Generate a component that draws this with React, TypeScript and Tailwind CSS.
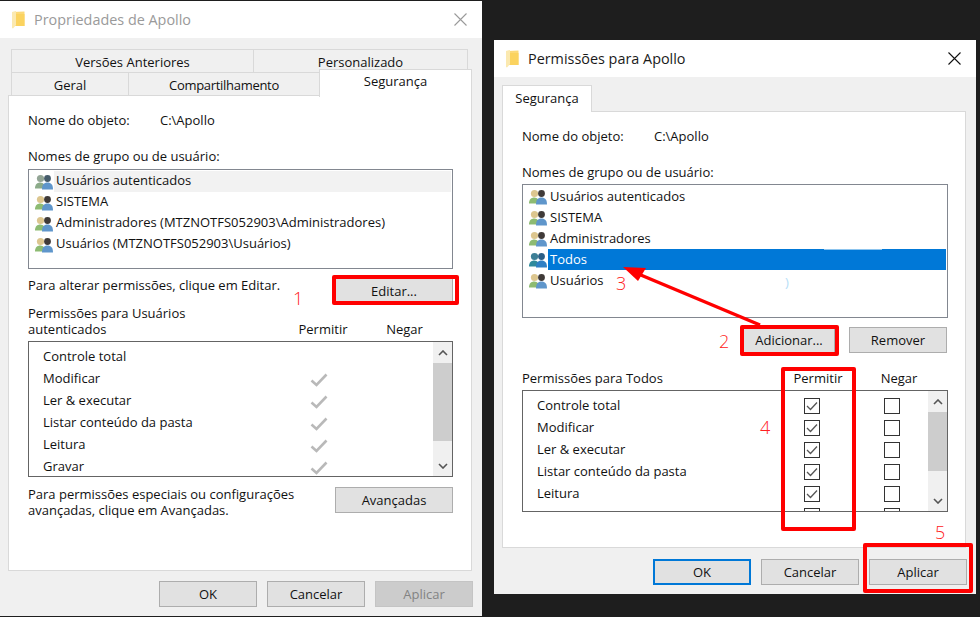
import React from 'react';

const FolderIcon = () => (
    <svg width="13" height="18" viewBox="0 0 13 18">
        <path d="M0 1 L12.5 0.5 L12.5 15 L0 15 Z" fill="#fcd978" />
        <path d="M4 3 L12.5 3 L12.5 15 L4 15 Z" fill="#fbd35f" />
        <path d="M0 1 L4 0 L4 14 L1 17.5 L0 17 Z" fill="#fbe9b0" />
    </svg>
);

const UsersIcon: React.FC<{ selected?: boolean; dim?: boolean }> = ({ selected, dim }) => {
    const leftHead = selected ? '#3d7f96' : dim ? '#93a595' : '#dcc68f';
    const leftBody = selected ? '#2f8a9c' : dim ? '#8cab8a' : '#8dbb72';
    const rightHead = selected ? '#2c5f86' : dim ? '#465c6b' : '#3f3a38';
    const rightBody = selected ? '#2f7fc4' : '#5f96cb';
    return (
        <svg width="18" height="16" viewBox="0 0 18 16" className="shrink-0">
            <circle cx="5.5" cy="4.5" r="3.6" fill={leftHead} />
            <path d="M0 14.5 C0 10.5 2 8.5 5.5 8.5 C8.5 8.5 10 10.5 10 14.5 Z" fill={leftBody} />
            <circle cx="12.5" cy="4.5" r="3.4" fill={rightHead} />
            <path d="M7 15.5 C7 10.5 9 8.5 12.5 8.5 C16 8.5 18 10.5 18 15.5 Z" fill={rightBody} />
        </svg>
    );
};

const Btn: React.FC<{ label: string; w?: string; disabled?: boolean; focused?: boolean }> = ({ label, w = 'w-[98px]', disabled, focused }) => (
    <div
        className={`${w} h-[26px] flex items-center justify-center pt-px ${
            focused
                ? 'bg-[#e1e1e1] border-2 border-[#0078d7]'
                : disabled
                  ? 'border border-[#c4c4c4] bg-[#cccccc] text-[#838383]'
                  : 'bg-[#e1e1e1] border border-[#adadad]'
        }`}
    >
        {label}
    </div>
);

const Chevron: React.FC<{ down?: boolean }> = ({ down }) => (
    <svg width="10" height="6" viewBox="0 0 10 6">
        <path d={down ? 'M1 1 L5 5 L9 1' : 'M1 5 L5 1 L9 5'} fill="none" stroke="#555555" strokeWidth="1.6" />
    </svg>
);

const Scrollbar: React.FC<{ thumb: string }> = ({ thumb }) => (
    <div className="w-[19px] shrink-0 bg-[#f0f0f0] flex flex-col">
        <div className="h-[21px] flex items-center justify-center shrink-0"><Chevron /></div>
        <div className={`${thumb} bg-[#cdcdcd] shrink-0`} />
        <div className="flex-1" />
        <div className="h-[21px] flex items-center justify-center shrink-0"><Chevron down /></div>
    </div>
);

const GreyCheck = () => (
    <svg width="18" height="14" viewBox="0 0 18 14" className="mt-[2px]">
        <path d="M1.5 7.5 L6.5 12 L16.5 1.5" fill="none" stroke="#b9b9b9" strokeWidth="2.6" />
    </svg>
);

const CheckBox: React.FC<{ checked?: boolean }> = ({ checked }) => (
    <div className="w-[16px] h-[16px] -mt-px border border-[#333333] bg-white flex items-center justify-center shrink-0">
        {checked && (
            <svg width="12" height="10" viewBox="0 0 12 10">
                <path d="M1 5 L4.5 8.5 L11 1.5" fill="none" stroke="#555555" strokeWidth="1.3" />
            </svg>
        )}
    </div>
);

const leftPerms = ['Controle total', 'Modificar', 'Ler & executar', 'Listar conteúdo da pasta', 'Leitura', 'Gravar'];
const rightPerms = ['Controle total', 'Modificar', 'Ler & executar', 'Listar conteúdo da pasta', 'Leitura'];

const TitleBar: React.FC<{ title: string; dim?: boolean }> = ({ title, dim }) => (
    <div className="h-[37px] bg-white flex items-center shrink-0">
        <div className="ml-[12px] mr-[9px] flex"><FolderIcon /></div>
        <span className={`text-[14.4px] flex-1 ${dim ? 'text-[#9a9a9a]' : 'text-[#1a1a1a]'}`}>{title}</span>
        <svg width="13" height="13" viewBox="0 0 13 13" className="mr-[15px]">
            <path d="M0.5 0.5 L12.5 12.5 M12.5 0.5 L0.5 12.5" stroke={dim ? '#9a9a9a' : '#111111'} strokeWidth="1.1" />
        </svg>
    </div>
);

const PropertiesDialog = () => (
    <div className="w-[482px] h-[615px] mt-px bg-[#f0f0f0] flex flex-col shrink-0">
        <TitleBar title="Propriedades de Apollo" dim />
        <div className="mt-[11px] ml-[11px] flex h-[23px] w-[457px] border-t border-[#d9d9d9]">
            <div className="w-[243px] border-x border-[#d9d9d9] flex items-center justify-center pt-[3px]">Versões Anteriores</div>
            <div className="flex-1 border-r border-[#d9d9d9] flex items-center justify-center pt-[3px]">Personalizado</div>
        </div>
        <div className="ml-[11px] flex h-[23px] border-t border-[#d9d9d9] w-[308px]">
            <div className="w-[118px] border-x border-[#d9d9d9] flex items-center justify-center pt-[3px]">Geral</div>
            <div className="w-[190px] flex items-center justify-center pt-[3px] tracking-[-0.3px]">Compartilhamento</div>
        </div>
        <div className="relative ml-[8px] w-[464px] h-[476px] bg-white border border-[#d9d9d9] pl-[19px] pt-[17px] flex flex-col">
            <div className="absolute left-[310px] top-[-27px] w-[153px] h-[28px] bg-white border-x border-t border-[#d9d9d9] flex items-center justify-center pb-[3px]">
                Segurança
            </div>
            <div className="flex h-[16px] items-center">
                <span className="w-[132px]">Nome do objeto:</span>
                <span>C:\Apollo</span>
            </div>
            <div className="mt-[20px] h-[16px] flex items-center">Nomes de grupo ou de usuário:</div>
            <div className="mt-[4px] w-[425px] h-[100px] border border-[#828790] bg-white px-px pt-px">
                {[
                    'Usuários autenticados',
                    'SISTEMA',
                    'Administradores (MTZNOTFS052903\\Administradores)',
                    'Usuários (MTZNOTFS052903\\Usuários)',
                ].map((name, i) => (
                    <div key={name} className="h-[21px] flex items-center pl-[5px]">
                        <UsersIcon dim={i === 0} />
                        <div className={`ml-[1px] flex-1 h-full flex items-center pl-[2px] pb-[2px] ${i === 0 ? 'bg-[#f2f2f2]' : ''}`}>{name}</div>
                    </div>
                ))}
            </div>
            <div className="mt-[9px] w-[425px] flex justify-between h-[26px]">
                <span className="h-[16px] flex items-center">Para alterar permissões, clique em Editar.</span>
                <Btn label="Editar..." w="w-[118px]" />
            </div>
            <div className="mt-px w-[425px] h-[32px] flex items-end">
                <div className="w-[255px] leading-[16px]">Permissões para Usuários<br />autenticados</div>
                <div className="w-[80px] text-center leading-[16px]">Permitir</div>
                <div className="w-[83px] text-center leading-[16px]">Negar</div>
            </div>
            <div className="mt-[4px] w-[425px] h-[136px] border border-[#646464] bg-white flex">
                <div className="flex-1 pt-[4px] pl-[14px]">
                    {leftPerms.map((p, i) => (
                        <div key={p} className="h-[22px] flex items-center">
                            <span className="w-[267px]">{p}</span>
                            {i > 0 && <GreyCheck />}
                        </div>
                    ))}
                </div>
                <Scrollbar thumb="h-[78px]" />
            </div>
            <div className="mt-[9px] w-[425px] flex justify-between">
                <div className="leading-[16px]">Para permissões especiais ou configurações<br />avançadas, clique em Avançadas.</div>
                <div className="mt-px">
                    <Btn label="Avançadas" w="w-[118px]" />
                </div>
            </div>
        </div>
        <div className="mt-[10px] pr-[9px] flex justify-end gap-[10px]">
            <Btn label="OK" />
            <Btn label="Cancelar" />
            <Btn label="Aplicar" disabled />
        </div>
    </div>
);

const PermissionsDialog = () => (
    <div className="w-[482px] h-[554px] ml-[12px] mt-[40px] bg-[#f0f0f0] flex flex-col shrink-0">
        <TitleBar title="Permissões para Apollo" />
        <div className="mt-[8px] ml-[8px] w-[90px] h-[27px] bg-white border-x border-t border-[#d9d9d9] flex items-center justify-center shrink-0 -mb-px relative z-10">
            Segurança
        </div>
        <div className="ml-[8px] w-[464px] h-[437px] bg-white border border-[#d9d9d9] pl-[19px] pt-[17px] flex flex-col">
            <div className="flex h-[16px] items-center">
                <span className="w-[132px]">Nome do objeto:</span>
                <span>C:\Apollo</span>
            </div>
            <div className="mt-[20px] h-[16px] flex items-center">Nomes de grupo ou de usuário:</div>
            <div className="mt-[3px] w-[426px] h-[134px] border border-[#828790] bg-white px-px pt-px">
                {['Usuários autenticados', 'SISTEMA', 'Administradores', 'Todos', 'Usuários'].map((name) => {
                    const selected = name === 'Todos';
                    return (
                        <div key={name} className="h-[21px] flex items-center pl-[5px]">
                            <UsersIcon selected={selected} />
                            <div className={`ml-[1px] flex-1 h-full flex items-center pl-[2px] ${selected ? 'bg-[#0078d7] text-white' : ''}`}>{name}</div>
                        </div>
                    );
                })}
            </div>
            <div className="mt-[9px] w-[425px] flex justify-end gap-[14px]">
                <Btn label="Adicionar..." w="w-[92px]" />
                <Btn label="Remover" />
            </div>
            <div className="mt-[18px] w-[426px] h-[16px] flex items-center">
                <div className="w-[256px]">Permissões para Todos</div>
                <div className="w-[80px] text-center">Permitir</div>
                <div className="w-[82px] text-center">Negar</div>
            </div>
            <div className="mt-[3px] w-[426px] h-[122px] border border-[#646464] bg-white flex overflow-hidden">
                <div className="flex-1 pt-[4px] pl-[14px] overflow-hidden">
                    {rightPerms.map((p) => (
                        <div key={p} className="h-[22px] flex items-center">
                            <span className="w-[267px]">{p}</span>
                            <CheckBox checked />
                            <div className="w-[64px]" />
                            <CheckBox />
                        </div>
                    ))}
                    <div className="h-[22px] flex items-center">
                        <span className="w-[267px]">Gravar</span>
                        <CheckBox />
                        <div className="w-[64px]" />
                        <CheckBox />
                    </div>
                </div>
                <Scrollbar thumb="h-[59px]" />
            </div>
        </div>
        <div className="mt-[11px] pr-[9px] flex justify-end gap-[10px]">
            <Btn label="OK" focused />
            <Btn label="Cancelar" />
            <Btn label="Aplicar" />
        </div>
    </div>
);

const Marker: React.FC<{ className: string }> = ({ className }) => (
    <div className={`absolute border-[4px] border-[#ff0000] rounded-[2px] ${className}`} />
);

const StepNumber: React.FC<{ n: string; className: string }> = ({ n, className }) => (
    <span className={`absolute text-[#ff2020] text-[18px] leading-[20px] font-light ${className}`}>{n}</span>
);

export default function App() {
    return (
        <div className="relative w-[980px] h-[617px] overflow-hidden bg-[#1e1e1e] flex items-start text-[13px] text-[#111111] font-['Open_Sans','Noto_Sans',sans-serif]">
            <PropertiesDialog />
            <PermissionsDialog />

            <Marker className="left-[332px] top-[275px] w-[127px] h-[30px]" />
            <Marker className="left-[740px] top-[325px] w-[99px] h-[31px]" />
            <Marker className="left-[781px] top-[367px] w-[75px] h-[164px]" />
            <Marker className="left-[863px] top-[543px] w-[110px] h-[50px]" />

            <StepNumber n="1" className="left-[293px] top-[288px]" />
            <StepNumber n="2" className="left-[719px] top-[331px]" />
            <StepNumber n="3" className="left-[616px] top-[273px]" />
            <StepNumber n="4" className="left-[760px] top-[417px]" />
            <StepNumber n="5" className="left-[935px] top-[522px]" />

            <span className="absolute left-[785px] top-[273px] text-[#b5def7]">)</span>
            <div className="absolute left-[824px] top-[249px] w-[58px] h-px bg-[#8cc4ee]" />

            <svg className="absolute left-0 top-0 pointer-events-none" width="980" height="617" viewBox="0 0 980 617">
                <line x1="760" y1="325" x2="636" y2="273" stroke="#ff0000" strokeWidth="3.5" />
                <polygon points="623,267 646,268 638,281" fill="#ff0000" />
            </svg>
        </div>
    );
}
